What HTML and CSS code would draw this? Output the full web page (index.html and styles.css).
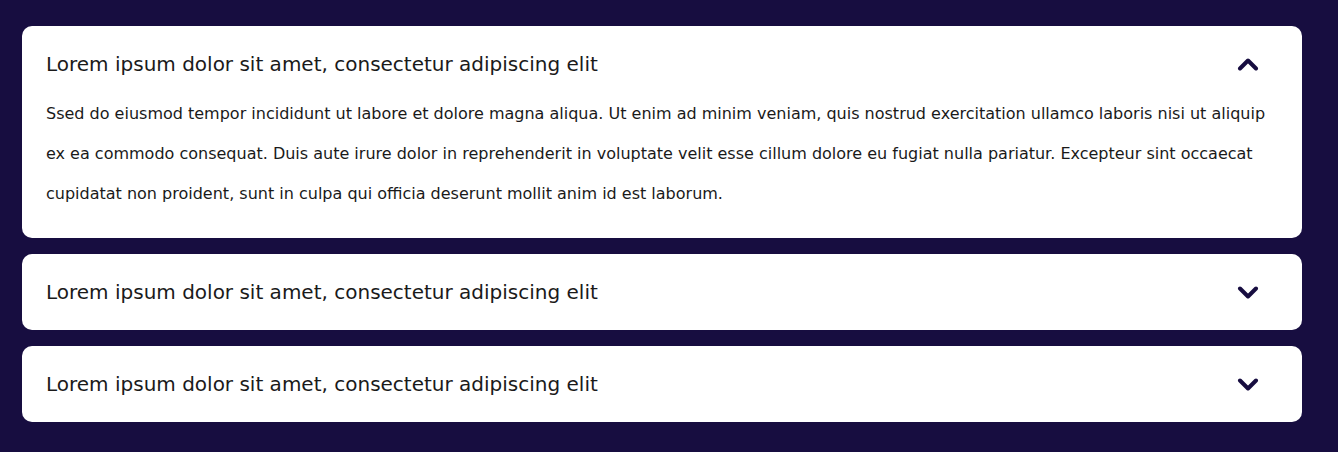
FILE: index.html
```html
<!DOCTYPE html>
<html lang="en">
<head>
<meta charset="utf-8">
<title>FAQ</title>
<link rel="stylesheet" href="styles.css">
</head>
<body>
<main class="faq">
  <section class="item is-open">
    <div class="item-head">
      <h3 class="item-title">Lorem ipsum dolor sit amet, consectetur adipiscing elit</h3>
      <svg class="chev" width="22" height="14" viewBox="0 0 22 14" aria-hidden="true"><path d="M3 11.5 L11 3.5 L19 11.5" fill="none" stroke="#170d40" stroke-width="4" stroke-linecap="round" stroke-linejoin="round"/></svg>
    </div>
    <p class="item-body">Ssed do eiusmod tempor incididunt ut labore et dolore magna aliqua. Ut enim ad minim veniam, quis nostrud exercitation ullamco laboris nisi ut aliquip ex ea commodo consequat. Duis aute irure dolor in reprehenderit in voluptate velit esse cillum dolore eu fugiat nulla pariatur. Excepteur sint occaecat cupidatat non proident, sunt in culpa qui officia deserunt mollit anim id est laborum.</p>
  </section>
  <section class="item">
    <div class="item-head">
      <h3 class="item-title">Lorem ipsum dolor sit amet, consectetur adipiscing elit</h3>
      <svg class="chev" width="22" height="14" viewBox="0 0 22 14" aria-hidden="true"><path d="M3 3.5 L11 11.5 L19 3.5" fill="none" stroke="#170d40" stroke-width="4" stroke-linecap="round" stroke-linejoin="round"/></svg>
    </div>
  </section>
  <section class="item">
    <div class="item-head">
      <h3 class="item-title">Lorem ipsum dolor sit amet, consectetur adipiscing elit</h3>
      <svg class="chev" width="22" height="14" viewBox="0 0 22 14" aria-hidden="true"><path d="M3 3.5 L11 11.5 L19 3.5" fill="none" stroke="#170d40" stroke-width="4" stroke-linecap="round" stroke-linejoin="round"/></svg>
    </div>
  </section>
</main>
</body>
</html>
```
FILE: styles.css
```css
html, body {
  margin: 0;
  padding: 0;
}
body {
  background: #170d40;
  font-family: "DejaVu Sans", sans-serif;
  color: #1a1a1a;
}
.faq {
  width: 1280px;
  padding: 26px 0 0 22px;
  display: flex;
  flex-direction: column;
  gap: 16px;
}
.item {
  background: #fff;
  border-radius: 10px;
}
.item-head {
  display: flex;
  align-items: center;
  justify-content: space-between;
  height: 76px;
  padding: 0 43px 0 24px;
  box-sizing: border-box;
}
.item-title {
  margin: 0;
  font-size: 20px;
  font-weight: 400;
  line-height: 24px;
}
.chev {
  display: block;
}
.item-body {
  margin: -8px 0 0;
  padding: 0 24px 24px;
  font-size: 16px;
  line-height: 40px;
}
```
